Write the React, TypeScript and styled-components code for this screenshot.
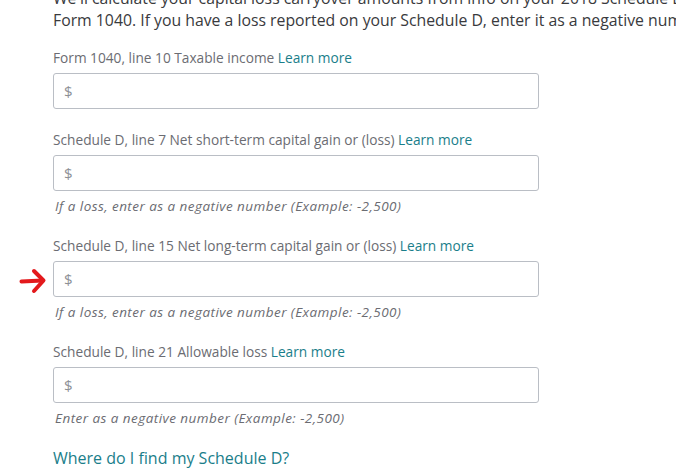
import React from "react";
import styled, { createGlobalStyle } from "styled-components";

const Global = createGlobalStyle`
  html, body { margin: 0; padding: 0; background: #ffffff; overflow: hidden; }
  body { font-family: "Open Sans", "Lato", sans-serif; }
`;

const Page = styled.div`
  width: 676px;
  height: 468px;
  overflow: hidden;
  position: relative;
`;

const Content = styled.div`
  margin-top: -13px;
  padding-left: 53px;
  display: flex;
  flex-direction: column;
`;

const Intro = styled.p`
  margin: 0 0 17px 0;
  font-size: 15.8px;
  line-height: 22px;
  color: #393a3d;
  white-space: nowrap;
`;

const Field = styled.div`
  display: flex;
  flex-direction: column;
  margin-bottom: 21px;
  position: relative;
`;

const Label = styled.div`
  font-size: 13.7px;
  line-height: 20px;
  color: #6b6c72;
  margin-bottom: 5px;
`;

const Link = styled.a`
  color: #1a7e8a;
  text-decoration: none;
`;

const InputBox = styled.div`
  box-sizing: border-box;
  width: 486px;
  height: 36px;
  border: 1px solid #babec5;
  border-radius: 3px;
  display: flex;
  align-items: center;
  padding-left: 10px;
  font-size: 15px;
  color: #8d9096;
`;

const Helper = styled.div`
  margin-top: 6px;
  margin-left: 2px;
  font-size: 13.5px;
  letter-spacing: 0.45px;
  line-height: 18px;
  font-style: italic;
  color: #6b6c72;
`;

const Arrow = styled.svg`
  position: absolute;
  left: -34px;
`;

const FindLink = styled.a`
  font-size: 16px;
  line-height: 22px;
  color: #1a7e8a;
  text-decoration: none;
  margin-top: -1px;
`;

type FieldProps = { label: string; helper?: string; arrow?: boolean };

const FormField = ({ label, helper, arrow }: FieldProps) => (
  <Field>
    <Label>
      {label} <Link>Learn more</Link>
    </Label>
    <InputBox>$</InputBox>
    {helper && <Helper>{helper}</Helper>}
    {arrow && (
      <Arrow width="28" height="26" viewBox="0 0 28 26" style={{ bottom: helper ? 27 : 5 }}>
        <path d="M2.5 13.5 L23.5 12.5" stroke="#e3191c" strokeWidth="4" strokeLinecap="round" fill="none" />
        <path d="M15 3 L24.5 12.5 L15 23" stroke="#e3191c" strokeWidth="4" strokeLinecap="round" strokeLinejoin="round" fill="none" />
      </Arrow>
    )}
  </Field>
);

export default function App() {
  return (
    <Page>
      <Global />
      <Content>
        <Intro>
          We'll calculate your capital loss carryover amounts from info on your 2018 Schedule D and
          <br />
          Form 1040. If you have a loss reported on your Schedule D, enter it as a negative number.
        </Intro>
        <FormField label="Form 1040, line 10 Taxable income" />
        <FormField
          label="Schedule D, line 7 Net short-term capital gain or (loss)"
          helper="If a loss, enter as a negative number (Example: -2,500)"
        />
        <FormField
          label="Schedule D, line 15 Net long-term capital gain or (loss)"
          helper="If a loss, enter as a negative number (Example: -2,500)"
          arrow
        />
        <FormField
          label="Schedule D, line 21 Allowable loss"
          helper="Enter as a negative number (Example: -2,500)"
        />
        <FindLink>Where do I find my Schedule D?</FindLink>
      </Content>
    </Page>
  );
}
